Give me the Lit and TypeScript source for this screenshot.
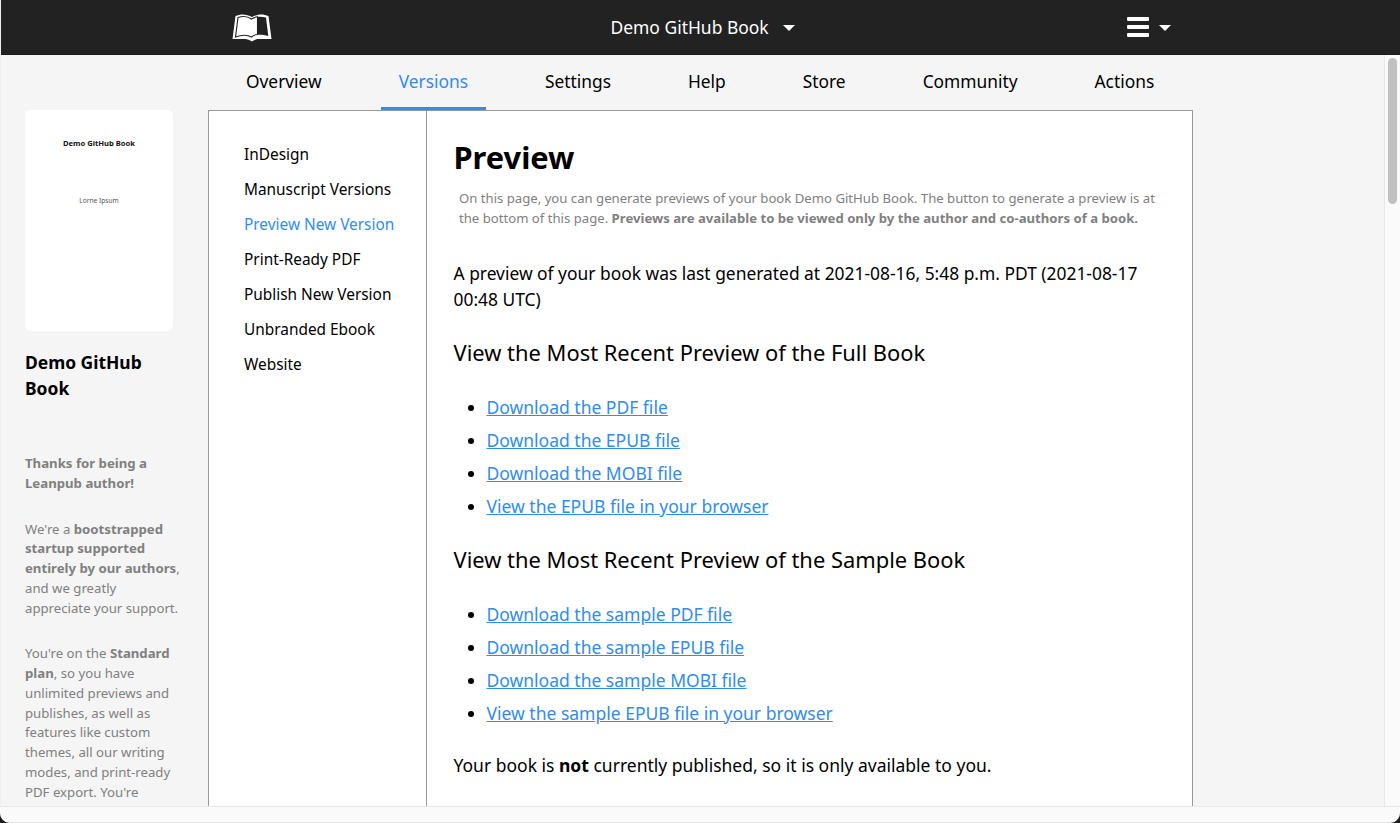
import { LitElement, html, css } from "lit";
import { customElement } from "lit/decorators.js";

const TABS = ["Overview", "Versions", "Settings", "Help", "Store", "Community", "Actions"];
const SIDE = ["InDesign", "Manuscript Versions", "Preview New Version", "Print-Ready PDF", "Publish New Version", "Unbranded Ebook", "Website"];
const FULL = ["Download the PDF file", "Download the EPUB file", "Download the MOBI file", "View the EPUB file in your browser"];
const SAMPLE = ["Download the sample PDF file", "Download the sample EPUB file", "Download the sample MOBI file", "View the sample EPUB file in your browser"];

@customElement("app-root")
export class AppRoot extends LitElement {
  static styles = css`
    :host { display: block; height: 823px; overflow: hidden; position: relative; font-family: "Noto Sans", sans-serif; color: #000; background: #fafafa; }
    * { box-sizing: border-box; }
    .frame { height: 806px; display: flex; flex-direction: column; overflow: hidden; border-left: 1px solid #eee; }
    .top { flex: 0 0 55px; background: #222; border-bottom: 1px solid #1a1a1a; display: flex; align-items: center; padding-left: 231px; color: #fff; }
    .logo { width: 40px; height: 30px; display: block; }
    .book-menu { margin-left: 338.5px; display: flex; align-items: center; font-size: 17.45px; width: 516.5px; }
    .caret { width: 0; height: 0; border-left: 6px solid transparent; border-right: 6px solid transparent; border-top: 6.5px solid #fff; margin-left: 14px; margin-top: 2px; }
    .burger { width: 22px; display: flex; flex-direction: column; gap: 4px; }
    .burger i { display: block; height: 4px; background: #fff; border-radius: 1px; }
    .caret.small { margin-left: 10px; }
    .body { flex: 1; display: flex; min-height: 0; background: #f5f5f5; }
    .left { flex: 0 0 207px; padding: 55px 26px 0 24px; overflow: hidden; }
    .cover { width: 148px; height: 221px; background: #fff; border-radius: 5px; display: flex; flex-direction: column; align-items: center; padding-top: 27px; }
    .cover b { font-size: 7.6px; line-height: 12px; color: #111; }
    .cover span { font-size: 6.6px; line-height: 10px; color: #555; margin-top: 47px; }
    .left h2 { font-size: 17.45px; line-height: 26px; margin: 18px 0 0; font-weight: 700; }
    .left p { font-size: 13.2px; line-height: 19.75px; color: #808080; margin: 0 0 26px; }
    .left p.first { margin-top: 53px; }
    .center { flex: 0 0 985px; display: flex; flex-direction: column; min-width: 0; }
    .tabs { flex: 0 0 55px; display: flex; padding-left: 20px; gap: 41px; font-size: 17.35px; }
    .tabs a { padding: 0 18px; line-height: 53px; height: 55px; white-space: nowrap; }
    .tabs a.on { color: #2f8cf2; border-bottom: 3px solid #2f8cf2; }
    .card { flex: 1; background: #fff; border: 1px solid #999; border-bottom: 0; display: flex; min-height: 0; }
    .side { flex: 0 0 218px; border-right: 1px solid #999; padding: 26px 0 0 35px; font-size: 15.4px; }
    .side a { display: block; line-height: 35px; white-space: nowrap; }
    .side a.on { color: #2f8cf2; }
    .main { flex: 1; padding: 25px 25px 0 26.5px; min-width: 0; overflow: hidden; }
    h1 { font-size: 30.8px; line-height: 42px; margin: 0; font-weight: 700; }
    .intro { font-size: 13.15px; line-height: 20px; color: #808080; margin: 10px 0 0 5.5px; }
    .line { font-size: 17.5px; line-height: 26.5px; margin: 0; }
    .last { font-size: 17.4px; margin: 31.5px 0 25.5px; }
    h3 { font-size: 21.9px; line-height: 30px; margin: 22px 0 0; font-weight: 400; }
    ul { margin: 23px 0 0; padding: 0 0 0 33px; font-size: 17.5px; line-height: 33px; }
    li a { color: #2f8cf2; text-decoration: underline; }
    .pub { margin-top: 22px; }
    .spacer { flex: 1; }
    .bar { flex: 0 0 16px; background: #fafafa; border-left: 1px solid #e8e8e8; padding: 3px 3px 0; }
    .bar i { display: block; width: 9px; height: 146px; border-radius: 4.5px; background: #c1c1c1; }
    .foot { height: 17px; border-top: 1px solid #e8e8e8; border-bottom: 1px solid #e4e4e4; background: #fafafa; }
    .corner { position: absolute; bottom: 0; width: 10px; height: 10px; background: #1c1c1c; }
    .corner.l { left: 0; clip-path: path("M0 0 C0 5.500 4.500 10 10 10 L0 10 Z"); }
    .corner.r { right: 0; clip-path: path("M10 0 C10 5.500 5.500 10 0 10 L10 10 Z"); }
  `;

  render() {
    return html`
      <div class="frame">
        <header class="top">
          <svg class="logo" viewBox="0 0 40 30" aria-hidden="true">
            <path d="M0.500 27 L3.500 4 C9 1.500 15 2 20 5 C25 2 31 1.500 36.500 4 L39.500 27 L27 27 C24.500 27 22.500 28 20 29.500 C17.500 28 15.500 27 13 27 Z" fill="#fff"/>
            <path d="M3.500 25 L6 5.500 C11 3.800 15.500 4.300 19.500 7 C22 5.500 23.500 5 25.500 4.800 L25.500 22.500 C22 22.800 21 23.500 19.500 25 C15 22.500 9 23 3.500 25 Z" fill="#fff" stroke="#222" stroke-width="1.100"/>
            <path d="M26 4.700 C29 4.500 31.500 4.800 34 5.500 L36.300 24 C33 23 29 22.500 26 22.700 Z" fill="#222"/>
          </svg>
          <div class="book-menu"><span>Demo GitHub Book</span><i class="caret"></i></div>
          <div class="burger"><i></i><i></i><i></i></div>
          <i class="caret small"></i>
        </header>
        <div class="body">
          <aside class="left">
            <div class="cover"><b>Demo GitHub Book</b><span>Lorne Ipsum</span></div>
            <h2>Demo GitHub Book</h2>
            <p class="first"><b>Thanks for being a Leanpub author!</b></p>
            <p>We're a <b>bootstrapped startup supported entirely by our authors</b>, and we greatly appreciate your support.</p>
            <p>You're on the <b>Standard plan</b>, so you have unlimited previews and publishes, as well as features like custom themes, all our writing modes, and print-ready PDF export. You're</p>
          </aside>
          <div class="center">
            <nav class="tabs">${TABS.map((t) => html`<a class=${t === "Versions" ? "on" : ""}>${t}</a>`)}</nav>
            <section class="card">
              <nav class="side">${SIDE.map((t) => html`<a class=${t === "Preview New Version" ? "on" : ""}>${t}</a>`)}</nav>
              <main class="main">
                <h1>Preview</h1>
                <p class="intro">On this page, you can generate previews of your book Demo GitHub Book. The button to generate a preview is at the bottom of this page. <b>Previews are available to be viewed only by the author and co-authors of a book.</b></p>
                <p class="line last">A preview of your book was last generated at 2021-08-16, 5:48 p.m. PDT (2021-08-17 00:48 UTC)</p>
                <h3>View the Most Recent Preview of the Full Book</h3>
                <ul>${FULL.map((t) => html`<li><a>${t}</a></li>`)}</ul>
                <h3>View the Most Recent Preview of the Sample Book</h3>
                <ul>${SAMPLE.map((t) => html`<li><a>${t}</a></li>`)}</ul>
                <p class="line pub">Your book is <b>not</b> currently published, so it is only available to you.</p>
              </main>
            </section>
          </div>
          <div class="spacer"></div>
          <div class="bar"><i></i></div>
        </div>
      </div>
      <div class="foot"></div>
      <i class="corner l"></i><i class="corner r"></i>
    `;
  }
}
